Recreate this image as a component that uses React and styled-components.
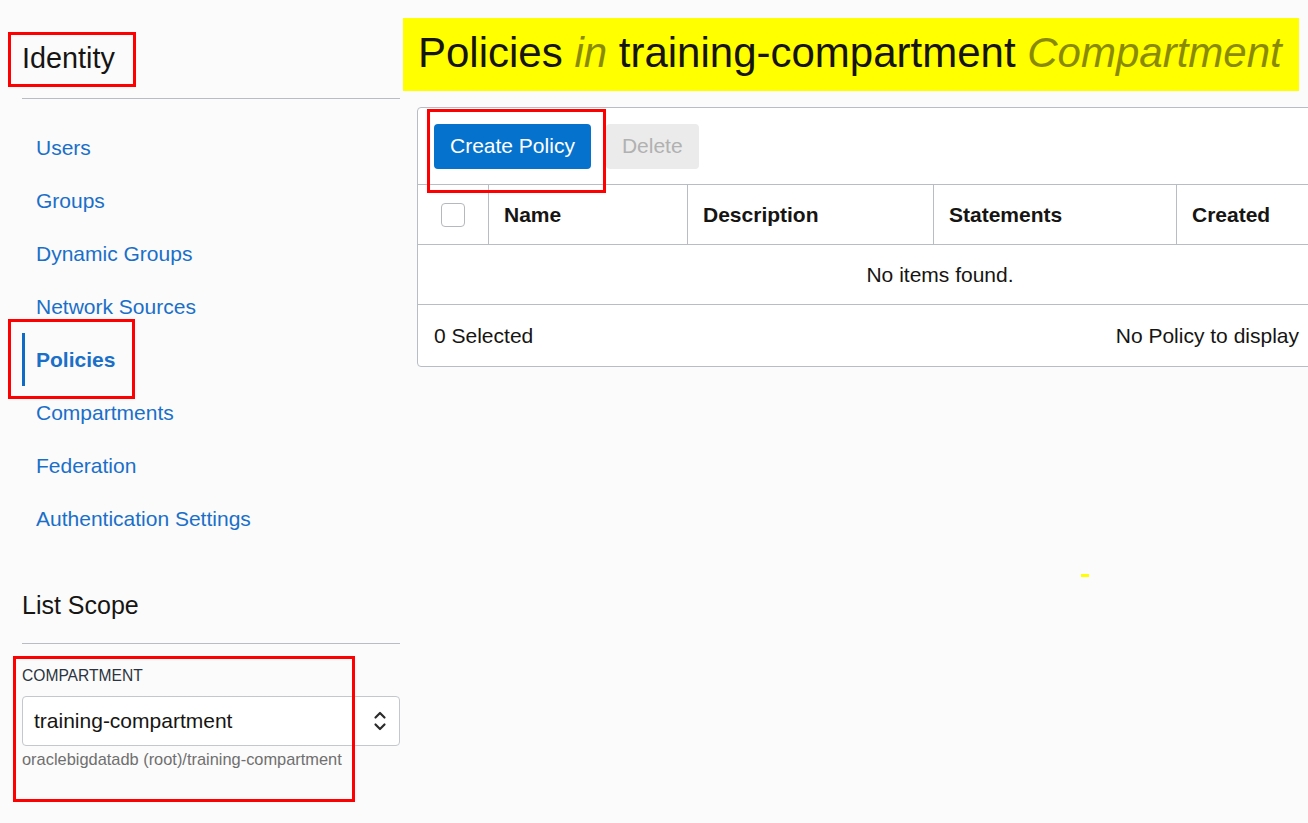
import React from "react";
import styled, { createGlobalStyle } from "styled-components";

const GlobalStyle = createGlobalStyle`
    html, body {
        margin: 0;
        padding: 0;
        background: #fbfbfb;
        overflow: hidden;
    }
    body {
        font-family: "Liberation Sans", Arial, sans-serif;
        color: #161513;
    }
    * {
        box-sizing: border-box;
    }
`;

const navItems = [
    "Users",
    "Groups",
    "Dynamic Groups",
    "Network Sources",
    "Policies",
    "Compartments",
    "Federation",
    "Authentication Settings",
];

const columns = [
    { label: "", width: 70 },
    { label: "Name", width: 199 },
    { label: "Description", width: 246 },
    { label: "Statements", width: 243 },
    { label: "Created", width: 286 },
];

const App = () => {
    return (
        <Page>
            <GlobalStyle />
            <Sidebar>
                <SideTitle size={28.8} lh={32}>
                    Identity
                </SideTitle>
                <Nav>
                    {navItems.map((item) => (
                        <NavLink key={item} active={item === "Policies"}>
                            {item}
                        </NavLink>
                    ))}
                </Nav>
                <Scope>
                    <SideTitle size={25} lh={28}>
                        List Scope
                    </SideTitle>
                    <FieldLabel>COMPARTMENT</FieldLabel>
                    <Select>
                        <span>training-compartment</span>
                        <svg width="14" height="22" viewBox="0 0 14 22">
                            <path
                                d="M2.5 7.5 L7 3 L11.5 7.5 M2.5 14.5 L7 19 L11.5 14.5"
                                fill="none"
                                stroke="#2b2b2b"
                                strokeWidth="2.2"
                                strokeLinecap="round"
                                strokeLinejoin="round"
                            />
                        </svg>
                    </Select>
                    <HelpText>oraclebigdatadb (root)/training-compartment</HelpText>
                </Scope>
            </Sidebar>

            <Main>
                <Heading>
                    Policies <Accent>in</Accent> training-compartment{" "}
                    <Accent>Compartment</Accent>
                </Heading>
                <Panel>
                    <Toolbar>
                        <Button primary>Create Policy</Button>
                        <Button disabled>Delete</Button>
                    </Toolbar>
                    <TableWrap>
                        <Table>
                            <HeaderRow>
                                {columns.map((col, i) => (
                                    <HeaderCell key={i} first={i === 0}>
                                        {i === 0 ? <Checkbox /> : col.label}
                                    </HeaderCell>
                                ))}
                            </HeaderRow>
                            <EmptyRow>No items found.</EmptyRow>
                        </Table>
                    </TableWrap>
                    <Footer>
                        <span>0 Selected</span>
                        <span>No Policy to display</span>
                    </Footer>
                </Panel>
                <Dash />
            </Main>

            <Annotation top={32} left={8} w={128} h={55} />
            <Annotation top={319} left={8} w={127} h={80} />
            <Annotation top={109} left={427} w={179} h={84} />
            <Annotation top={656} left={13} w={342} h={146} />
        </Page>
    );
};

export default App;

const Page = styled.div`
    position: relative;
    display: flex;
    align-items: flex-start;
    width: 1308px;
    height: 823px;
`;

const Sidebar = styled.aside`
    flex: 0 0 400px;
    padding: 42px 0 0 22px;
`;

const SideTitle = styled.h2`
    margin: 0;
    font-size: ${(p) => p.size}px;
    line-height: ${(p) => p.lh}px;
    font-weight: 400;
    color: #161513;
    padding-bottom: 24px;
    border-bottom: 1px solid #b8bcc3;
`;

const Nav = styled.nav`
    display: flex;
    flex-direction: column;
    margin-top: 22px;
`;

const NavLink = styled.a`
    display: block;
    height: 53px;
    line-height: 53px;
    font-size: 21px;
    color: #1a6fc9;
    font-weight: ${(p) => (p.active ? 700 : 400)};
    padding-left: ${(p) => (p.active ? 11 : 14)}px;
    border-left: ${(p) => (p.active ? "3px solid #0f6cc6" : "none")};
    cursor: pointer;
`;

const Scope = styled.div`
    margin-top: 46px;
`;

const FieldLabel = styled.div`
    margin-top: 23px;
    font-size: 15.6px;
    line-height: 18px;
    color: #2b3440;
`;

const Select = styled.div`
    margin-top: 11px;
    height: 50px;
    display: flex;
    align-items: center;
    justify-content: space-between;
    padding: 0 12px 0 11px;
    background: #fff;
    border: 1px solid #c4c7cc;
    border-radius: 4px;
    font-size: 21px;
    color: #161513;
`;

const HelpText = styled.div`
    margin-top: 4px;
    font-size: 16.4px;
    line-height: 18px;
    color: #6f6f6f;
`;

const Main = styled.main`
    position: relative;
    flex: 1;
    margin-left: 3px;
    padding-top: 18px;
    align-self: stretch;
`;

const Heading = styled.h1`
    display: inline-block;
    margin: 0;
    background: #ffff00;
    font-size: 42px;
    font-weight: 400;
    line-height: 70px;
    padding: 0 17px 3px 15px;
    color: #161513;
    white-space: nowrap;
`;

const Accent = styled.em`
    color: #8a8a00;
`;

const Panel = styled.section`
    margin: 16px 0 0 14px;
    width: 899px;
    background: #fff;
    border: 1px solid #b8bcc3;
    border-radius: 4px;
    overflow: hidden;
`;

const Toolbar = styled.div`
    display: flex;
    gap: 15px;
    padding: 16px 16px 15px;
`;

const Button = styled.button`
    height: 45px;
    padding: 0 16px 2px;
    border: none;
    border-radius: 4px;
    font-family: inherit;
    font-size: 21px;
    background: ${(p) => (p.primary ? "#0572ce" : "#ebebeb")};
    color: ${(p) => (p.primary ? "#fff" : "#b1b1b1")};
    cursor: ${(p) => (p.disabled ? "default" : "pointer")};
`;

const TableWrap = styled.div`
    overflow: hidden;
`;

const Table = styled.div`
    width: 1044px;
`;

const HeaderRow = styled.div`
    display: grid;
    grid-template-columns: ${columns.map((c) => c.width + "px").join(" ")};
    height: 61px;
    border-top: 1px solid #b8bcc3;
    border-bottom: 1px solid #b8bcc3;
`;

const HeaderCell = styled.div`
    display: flex;
    align-items: center;
    padding-left: ${(p) => (p.first ? 23 : 15)}px;
    border-left: ${(p) => (p.first ? "none" : "1px solid #b8bcc3")};
    font-size: 21px;
    font-weight: 700;
    color: #161513;
`;

const Checkbox = styled.span`
    width: 24px;
    height: 24px;
    border: 1px solid #b5b8bd;
    border-radius: 4px;
    background: #fff;
`;

const EmptyRow = styled.div`
    height: 60px;
    display: flex;
    align-items: center;
    justify-content: center;
    font-size: 21px;
    border-bottom: 1px solid #b8bcc3;
`;

const Footer = styled.div`
    height: 61px;
    display: flex;
    align-items: center;
    justify-content: space-between;
    padding: 0 16px;
    font-size: 21px;
`;

const Dash = styled.span`
    position: absolute;
    left: 678px;
    top: 574px;
    width: 8px;
    height: 3px;
    background: #ffff00;
`;

const Annotation = styled.div`
    position: absolute;
    top: ${(p) => p.top}px;
    left: ${(p) => p.left}px;
    width: ${(p) => p.w}px;
    height: ${(p) => p.h}px;
    border: 3px solid #ff0000;
    pointer-events: none;
`;
